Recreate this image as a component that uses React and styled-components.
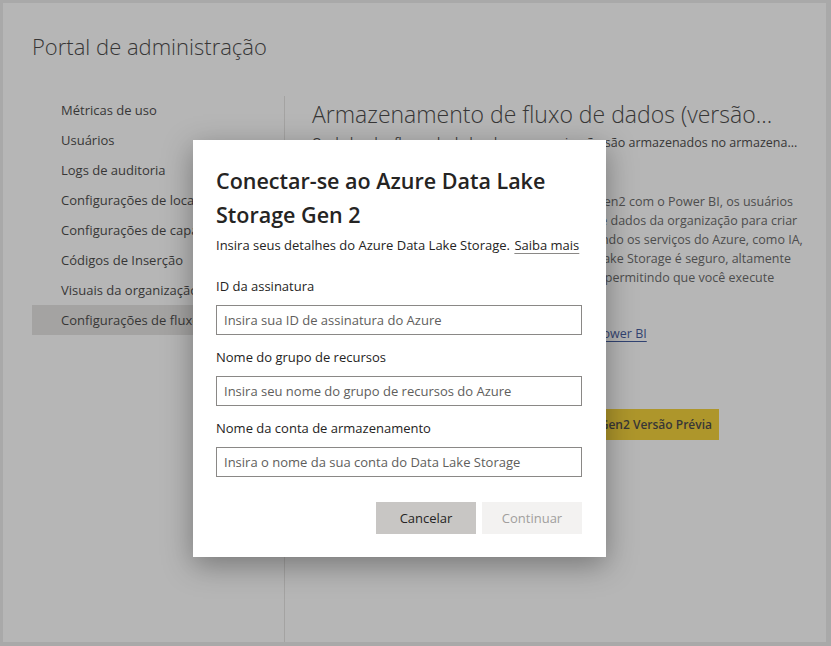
import styled, { createGlobalStyle } from 'styled-components'

const GlobalStyle = createGlobalStyle`
    body {
        margin: 0;
        font-family: "Open Sans", "Noto Sans", sans-serif;
        color: #252423;
    }
`

const navItems = [
    'Métricas de uso',
    'Usuários',
    'Logs de auditoria',
    'Configurações de locatário',
    'Configurações de capacidade',
    'Códigos de Inserção',
    'Visuais da organização',
    'Configurações de fluxo de dados',
]

// linhas do texto que fica por trás do modal
const paragraph = [
    'Ao conectar a conta do Azure Data Lake Storage Gen2 com o Power BI, os usuários',
    'podem armazenar e usar diretamente os fluxos de dados da organização para criar',
    'soluções de análise de dados mais avançadas usando os serviços do Azure, como IA,',
    'aprendizado de máquina e outros. O Azure Data Lake Storage é seguro, altamente',
    'escalonável e totalmente compatível com o HDFS, permitindo que você execute',
]

const fields = [
    { label: 'ID da assinatura', placeholder: 'Insira sua ID de assinatura do Azure' },
    { label: 'Nome do grupo de recursos', placeholder: 'Insira seu nome do grupo de recursos do Azure' },
    { label: 'Nome da conta de armazenamento', placeholder: 'Insira o nome da sua conta do Data Lake Storage' },
]

function App() {
    return (
        <>
            <GlobalStyle />
            <Screen>
                <Header>
                    <PageTitle>Portal de administração</PageTitle>
                </Header>
                <Body>
                    <Nav>
                        {navItems.map((item, i) => (
                            <NavItem key={item} $active={i === navItems.length - 1}>{item}</NavItem>
                        ))}
                    </Nav>
                    <Main>
                        <SectionTitle>Armazenamento de fluxo de dados (versão...</SectionTitle>
                        <SectionSub>Os dados dos fluxos de dados da sua organização são armazenados no armazena...</SectionSub>
                        <Paragraph>
                            {paragraph.map((line) => (
                                <Line key={line}>{line}</Line>
                            ))}
                        </Paragraph>
                        <PageLink>Saiba mais sobre o uso do Data Lake Storage no Power BI</PageLink>
                        <YellowButton>Conectar-se à conta do Azure Data Lake Storage Gen2 Versão Prévia</YellowButton>
                    </Main>
                </Body>
                <Overlay />
                <Dialog>
                    <DialogTitle>Conectar-se ao Azure Data Lake Storage Gen 2</DialogTitle>
                    <DialogText>
                        Insira seus detalhes do Azure Data Lake Storage. <DialogLink>Saiba mais</DialogLink>
                    </DialogText>
                    {fields.map((f, i) => (
                        <Field key={f.label} $first={i === 0}>
                            <Label>{f.label}</Label>
                            <Input placeholder={f.placeholder} />
                        </Field>
                    ))}
                    <Actions>
                        <Button>Cancelar</Button>
                        <Button $disabled>Continuar</Button>
                    </Actions>
                </Dialog>
            </Screen>
        </>
    )
}


const Screen = styled.div`
    position: relative;
    width: 831px;
    height: 646px;
    box-sizing: border-box;
    border-style: solid;
    border-color: #a9a9a9;
    border-width: 3px 5px 4px 3px;
    background: #fff;
    overflow: hidden;
    display: flex;
    flex-direction: column;
`

const Header = styled.div`
    height: 92px;
    box-sizing: border-box;
    padding: 28px 0 0 29px;
`

const PageTitle = styled.h1`
    margin: 0;
    font-size: 22px;
    font-weight: 300;
    line-height: 30px;
    color: #252423;
`

const Body = styled.div`
    flex: 1;
    display: flex;
`

const Nav = styled.div`
    width: 252px;
    margin-left: 29px;
    flex-shrink: 0;
`

const NavItem = styled.div`
    height: 30px;
    line-height: 30px;
    padding-left: 29px;
    font-size: 13px;
    white-space: nowrap;
    overflow: hidden;
    background: ${props => props.$active ? '#e1dfdd' : 'transparent'};
`

const Main = styled.div`
    flex: 1;
    margin-top: 1px;
    border-left: 1px solid #e1dfdd;
    padding: 2px 0 0 27px;
    min-width: 0;
`

const SectionTitle = styled.h2`
    margin: 0;
    font-size: 23px;
    font-weight: 300;
    line-height: 32px;
    white-space: nowrap;
`

const SectionSub = styled.div`
    margin-top: 4px;
    font-size: 12.5px;
    line-height: 18px;
    white-space: nowrap;
`

const Paragraph = styled.div`
    margin-top: 40px;
    font-size: 12.5px;
    line-height: 19px;
    color: #4a4a4a;
`

const Line = styled.div`
    white-space: nowrap;
`

const PageLink = styled.a`
    display: block;
    margin-top: 37px;
    font-size: 12.5px;
    line-height: 19px;
    color: #1a3a8a;
    text-decoration: underline;
    text-underline-offset: 3px;
    white-space: nowrap;
`

const YellowButton = styled.button`
    display: block;
    margin-top: 66px;
    height: 31px;
    padding: 0 7px;
    border: none;
    background: #f2c811;
    font-family: inherit;
    font-size: 12px;
    font-weight: 600;
    color: #252423;
    white-space: nowrap;
`

const Overlay = styled.div`
    position: absolute;
    inset: 0;
    background: rgba(80, 80, 80, 0.42);
`

const Dialog = styled.div`
    position: absolute;
    left: 190px;
    top: 137px;
    width: 413px;
    box-sizing: border-box;
    padding: 24px 24px 23px 23px;
    background: #fff;
    box-shadow: 0 8px 28px rgba(0, 0, 0, 0.35);
`

const DialogTitle = styled.h3`
    margin: 0;
    font-size: 21.5px;
    font-weight: 600;
    line-height: 34px;
    color: #252423;
`

const DialogText = styled.p`
    margin: 3px 0 0;
    font-size: 13px;
    line-height: 20px;
`

const DialogLink = styled.a`
    margin-left: 1px;
    color: #252423;
    text-decoration: underline;
    text-decoration-color: #8a8886;
    text-underline-offset: 3px;
`

const Field = styled.div`
    margin-top: ${props => props.$first ? '21px' : '12px'};
    display: flex;
    flex-direction: column;
    gap: 9px;
`

const Label = styled.label`
    font-size: 13px;
    line-height: 20px;
`

const Input = styled.input`
    width: 366px;
    height: 30px;
    box-sizing: border-box;
    border: 1px solid #8a8886;
    padding: 0 7px;
    font-family: inherit;
    font-size: 13px;
    color: #252423;
    outline: none;

    &::placeholder {
        color: #605e5c;
    }
`

const Actions = styled.div`
    margin-top: 25px;
    display: flex;
    justify-content: flex-end;
    gap: 6px;
`

const Button = styled.button`
    width: 100px;
    height: 32px;
    border: none;
    font-family: inherit;
    font-size: 13px;
    background: ${props => props.$disabled ? '#f3f2f1' : '#c8c6c4'};
    color: ${props => props.$disabled ? '#a19f9d' : '#252423'};
`


export default App
